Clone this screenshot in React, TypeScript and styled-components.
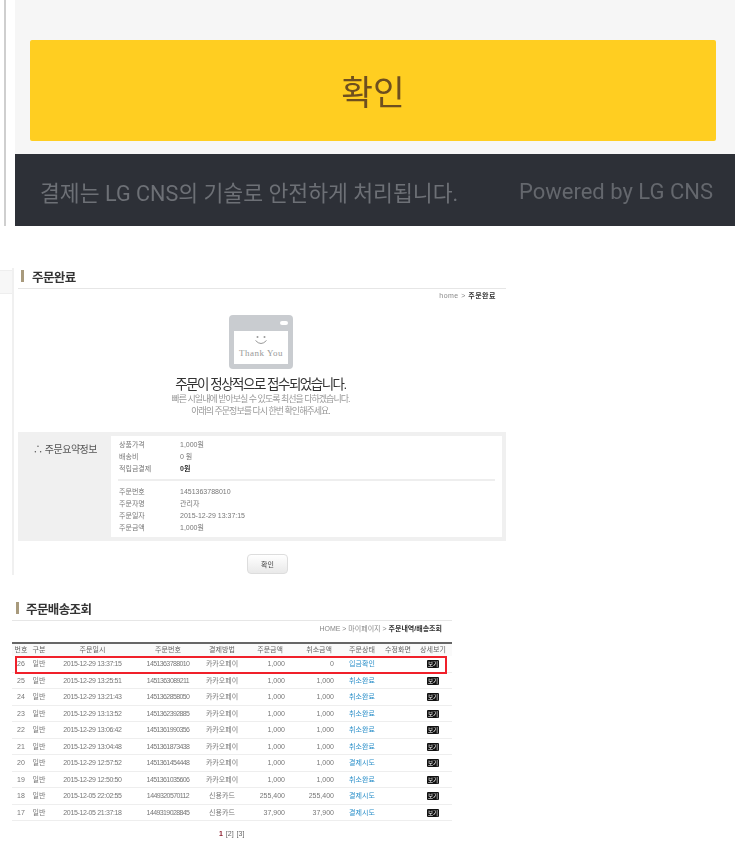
import React, { FC } from "react";
import styled, { createGlobalStyle } from "styled-components";

const GlobalStyle = createGlobalStyle`
  html, body {
    margin: 0;
    padding: 0;
    background: #fff;
    overflow: hidden;
  }
  body {
    font-family: "Liberation Sans", "Noto Sans CJK KR", sans-serif;
    color: #555;
  }
`;

const Page = styled.div`
  width: 740px;
  height: 843px;
  overflow: hidden;
`;

/* mobile payment screen at the top */
const PayShot = styled.section`
  display: flex;
  height: 226px;
  padding-left: 4px;
`;

const PayRule = styled.div`
  width: 2px;
  background: #cfcfcf;
`;

const PayPanel = styled.div`
  display: flex;
  flex-direction: column;
  width: 720px;
  margin-left: 9px;
  background: #f6f6f6;
`;

const ConfirmArea = styled.div`
  height: 154px;
  padding: 40px 19px 0 15px;
  box-sizing: border-box;
`;

const ConfirmBtn = styled.button`
  display: block;
  width: 100%;
  height: 101px;
  padding: 0 0 2px;
  border: 0;
  border-radius: 2px;
  background: #ffce21;
  color: #6e4f1f;
  font-family: Roboto, "Noto Sans CJK KR", sans-serif;
  font-size: 34.5px;
  filter: blur(0.3px);
`;

const PayFooter = styled.div`
  display: flex;
  flex: 1;
  align-items: center;
  justify-content: space-between;
  padding: 2px 22px 0 25px;
  background: #2d3037;
  color: #6d7076;
  font-family: Roboto, "Noto Sans CJK KR", sans-serif;
  font-size: 21.6px;
  white-space: nowrap;
  filter: blur(0.3px);
`;

const PoweredBy = styled.span`
  color: #64676d;
  font-size: 22px;
`;

/* order complete capture */
const CompleteShot = styled.section`
  display: flex;
  width: 506px;
  height: 307px;
  margin-top: 42px;
  filter: blur(0.5px);
`;

const SideGutter = styled.div`
  flex: none;
  width: 12px;
  height: 22px;
  margin-top: 2px;
  background: #f7f7f7;
  border-top: 1px solid #eee;
  border-bottom: 1px solid #eee;
`;

const CompleteBody = styled.div`
  flex: 1;
  padding-left: 4px;
  border-left: 2px solid #f0f0f0;
`;

const TitleRow = styled.div<{ $gap: number }>`
  display: flex;
  align-items: center;
  gap: ${(p) => p.$gap}px;
  height: 21px;
  padding-bottom: 4px;
  box-sizing: border-box;
  border-bottom: 1px solid #e6e6e6;
`;

const TitleBar = styled.i<{ $left: number }>`
  width: 3px;
  height: 12px;
  margin-left: ${(p) => p.$left}px;
  background: #a89a7c;
`;

const TitleText = styled.h2`
  margin: 0;
  color: #333;
  font-size: 12.5px;
  font-weight: 700;
  letter-spacing: -0.6px;
`;

const Crumb = styled.div<{ $pad: number; $track?: number }>`
  padding-right: ${(p) => p.$pad}px;
  color: #888;
  font-size: 7px;
  line-height: 10px;
  letter-spacing: ${(p) => p.$track ?? 0}px;
  text-align: right;

  b {
    color: #333;
  }
`;

const CompleteCrumb = styled(Crumb)`
  margin-top: 2px;
`;

const DoneBlock = styled.div`
  padding-right: 3px;
`;

const ThanksArt = styled.svg`
  display: block;
  margin: 14px auto 0;
`;

const DoneHeading = styled.h3`
  margin: 8px 0 0;
  color: #333;
  font-size: 13.5px;
  font-weight: 400;
  line-height: 16px;
  letter-spacing: -1.5px;
  text-align: center;
`;

const DoneNote = styled.p`
  margin: 0;
  color: #999;
  font-size: 9px;
  line-height: 12px;
  letter-spacing: -1px;
  text-align: center;
`;

const SummaryBox = styled.div`
  display: flex;
  height: 109px;
  margin-top: 15px;
  padding: 4px 4px 4px 0;
  box-sizing: border-box;
  background: #f0f0f0;
`;

const SummaryLabel = styled.div`
  flex: none;
  width: 93px;
  padding: 7px 0 0 15px;
  box-sizing: border-box;
  color: #555;
  font-size: 10px;
  line-height: 14px;
  letter-spacing: -0.5px;
  white-space: nowrap;
`;

const SummaryInner = styled.div`
  flex: 1;
  padding: 3px 7px 0;
  background: #fff;
`;

const InfoRow = styled.div`
  display: flex;
  height: 11.8px;
  font-size: 7px;
  line-height: 12px;
  color: #777;
`;

const InfoKey = styled.span`
  width: 61px;
  padding-left: 1px;
`;

const InfoValue = styled.span<{ $strong?: boolean }>`
  color: ${(p) => (p.$strong ? "#333" : "#777")};
  font-weight: ${(p) => (p.$strong ? 700 : 400)};
`;

const InfoRule = styled.div`
  height: 2px;
  margin: 5px 0 5px;
  background: #eee;
`;

const PlainBtn = styled.button`
  display: block;
  width: 41px;
  height: 20px;
  margin: 13px 0 0 229px;
  padding: 0;
  border: 1px solid #ddd;
  border-radius: 4px;
  background: linear-gradient(#fff, #e9e9e9);
  color: #444;
  font-family: inherit;
  font-size: 7px;
`;

/* order list capture */
const ListShot = styled.section`
  width: 440px;
  margin: 25px 0 0 12px;
  filter: blur(0.5px);
`;

const ListCrumb = styled(Crumb)`
  margin-top: 3px;
`;

const GRID = "18px 18px 89px 62px 46px 43px 54px 40px 32px 38px";

const HeadRow = styled.div`
  display: grid;
  grid-template-columns: ${GRID};
  height: 14px;
  margin-top: 8px;
  box-sizing: border-box;
  border-top: 2px solid #666;
  background: #fafafa;
  color: #666;
  font-size: 7px;
  line-height: 12px;
  text-align: center;
`;

const Row = styled.div<{ $hit?: boolean }>`
  position: relative;
  display: grid;
  grid-template-columns: ${GRID};
  height: 16.5px;
  box-sizing: border-box;
  border-bottom: 1px solid #eee;
  color: #777;
  font-size: 7px;
  line-height: 16px;
  text-align: center;

  &::after {
    content: "";
    display: ${(p) => (p.$hit ? "block" : "none")};
    position: absolute;
    top: 0;
    left: 3px;
    right: 5px;
    height: 18px;
    box-sizing: border-box;
    border: 2px solid #f0202a;
  }
`;

const DateCell = styled.span`
  letter-spacing: -0.35px;
`;

const IdCell = styled.span`
  letter-spacing: -0.6px;
`;

const Amount = styled.span<{ $pad: number }>`
  padding-right: ${(p) => p.$pad}px;
  text-align: right;
`;

const Status = styled.span`
  color: #2b8fc9;
`;

const ViewCell = styled.span`
  display: flex;
  align-items: center;
  justify-content: center;
`;

const ViewBtn = styled.span`
  width: 12px;
  height: 8px;
  border-radius: 1px;
  background: #111;
  color: #fff;
  font-size: 5.5px;
  line-height: 8px;
  text-align: center;
`;

const Pager = styled.div`
  margin-top: 8px;
  padding-left: 207px;
  color: #666;
  font-size: 7px;
  line-height: 10px;
  word-spacing: 1px;

  b {
    color: #8c1c2c;
  }
`;

type Order = {
  no: number;
  at: string;
  id: string;
  pay: string;
  total: string;
  cancel: string;
  status: string;
};

const ORDERS: Order[] = [
  { no: 26, at: "2015-12-29 13:37:15", id: "1451363788010", pay: "카카오페이", total: "1,000", cancel: "0", status: "입금확인" },
  { no: 25, at: "2015-12-29 13:25:51", id: "1451363089211", pay: "카카오페이", total: "1,000", cancel: "1,000", status: "취소완료" },
  { no: 24, at: "2015-12-29 13:21:43", id: "1451362858050", pay: "카카오페이", total: "1,000", cancel: "1,000", status: "취소완료" },
  { no: 23, at: "2015-12-29 13:13:52", id: "1451362392885", pay: "카카오페이", total: "1,000", cancel: "1,000", status: "취소완료" },
  { no: 22, at: "2015-12-29 13:06:42", id: "1451361990356", pay: "카카오페이", total: "1,000", cancel: "1,000", status: "취소완료" },
  { no: 21, at: "2015-12-29 13:04:48", id: "1451361873438", pay: "카카오페이", total: "1,000", cancel: "1,000", status: "취소완료" },
  { no: 20, at: "2015-12-29 12:57:52", id: "1451361454448", pay: "카카오페이", total: "1,000", cancel: "1,000", status: "결제시도" },
  { no: 19, at: "2015-12-29 12:50:50", id: "1451361035606", pay: "카카오페이", total: "1,000", cancel: "1,000", status: "취소완료" },
  { no: 18, at: "2015-12-05 22:02:55", id: "1449320570112", pay: "신용카드", total: "255,400", cancel: "255,400", status: "결제시도" },
  { no: 17, at: "2015-12-05 21:37:18", id: "1449319028845", pay: "신용카드", total: "37,900", cancel: "37,900", status: "결제시도" },
];

const ThankYou: FC = () => (
  <ThanksArt width="64" height="54" viewBox="0 0 64 54" aria-hidden="true">
    <rect width="64" height="54" rx="4" fill="#c9ccd0" />
    <rect x="51" y="6" width="8" height="4" rx="2" fill="#fff" />
    <rect x="5" y="16" width="54" height="33" fill="#fff" />
    <circle cx="28.5" cy="22" r="1" fill="#999" />
    <circle cx="35.5" cy="22" r="1" fill="#999" />
    <path d="M26.5 25.5q5.5 6 11 0" fill="none" stroke="#999" strokeWidth="1" />
    <text x="32" y="41" textAnchor="middle" fontSize="9" letterSpacing="0.5" fill="#999" fontFamily="'Liberation Serif', serif">
      Thank You
    </text>
  </ThanksArt>
);

const App: FC = () => {
  return (
    <Page>
      <GlobalStyle />

      <PayShot>
        <PayRule />
        <PayPanel>
          <ConfirmArea>
            <ConfirmBtn>확인</ConfirmBtn>
          </ConfirmArea>
          <PayFooter>
            <span>결제는 LG CNS의 기술로 안전하게 처리됩니다.</span>
            <PoweredBy>Powered by LG CNS</PoweredBy>
          </PayFooter>
        </PayPanel>
      </PayShot>

      <CompleteShot>
        <SideGutter />
        <CompleteBody>
          <TitleRow $gap={8}>
            <TitleBar $left={3} />
            <TitleText>주문완료</TitleText>
          </TitleRow>
          <CompleteCrumb $pad={10} $track={0.5}>
            home &gt; <b>주문완료</b>
          </CompleteCrumb>
          <DoneBlock>
            <ThankYou />
            <DoneHeading>주문이 정상적으로 접수되었습니다.</DoneHeading>
            <DoneNote>빠른 시일내에 받아보실 수 있도록 최선을 다하겠습니다.</DoneNote>
            <DoneNote>아래의 주문정보를 다시 한번 확인해주세요.</DoneNote>
          </DoneBlock>
          <SummaryBox>
            <SummaryLabel>∴ 주문요약정보</SummaryLabel>
            <SummaryInner>
              <InfoRow><InfoKey>상품가격</InfoKey><InfoValue>1,000원</InfoValue></InfoRow>
              <InfoRow><InfoKey>배송비</InfoKey><InfoValue>0 원</InfoValue></InfoRow>
              <InfoRow><InfoKey>적립금결제</InfoKey><InfoValue $strong>0원</InfoValue></InfoRow>
              <InfoRule />
              <InfoRow><InfoKey>주문번호</InfoKey><InfoValue>1451363788010</InfoValue></InfoRow>
              <InfoRow><InfoKey>주문자명</InfoKey><InfoValue>관리자</InfoValue></InfoRow>
              <InfoRow><InfoKey>주문일자</InfoKey><InfoValue>2015-12-29 13:37:15</InfoValue></InfoRow>
              <InfoRow><InfoKey>주문금액</InfoKey><InfoValue>1,000원</InfoValue></InfoRow>
            </SummaryInner>
          </SummaryBox>
          <PlainBtn>확인</PlainBtn>
        </CompleteBody>
      </CompleteShot>

      <ListShot>
        <TitleRow $gap={7}>
          <TitleBar $left={4} />
          <TitleText>주문배송조회</TitleText>
        </TitleRow>
        <ListCrumb $pad={10}>
          HOME &gt; 마이페이지 &gt; <b>주문내역/배송조회</b>
        </ListCrumb>
        <HeadRow>
          <span>번호</span>
          <span>구분</span>
          <span>주문일시</span>
          <span>주문번호</span>
          <span>결제방법</span>
          <Amount $pad={5}>주문금액</Amount>
          <Amount $pad={10}>취소금액</Amount>
          <span>주문상태</span>
          <span>수정화면</span>
          <span>상세보기</span>
        </HeadRow>
        {ORDERS.map((o, i) => (
          <Row key={o.no} $hit={i === 0}>
            <span>{o.no}</span>
            <span>일반</span>
            <DateCell>{o.at}</DateCell>
            <IdCell>{o.id}</IdCell>
            <span>{o.pay}</span>
            <Amount $pad={3}>{o.total}</Amount>
            <Amount $pad={8}>{o.cancel}</Amount>
            <Status>{o.status}</Status>
            <span />
            <ViewCell>
              <ViewBtn>보기</ViewBtn>
            </ViewCell>
          </Row>
        ))}
        <Pager>
          <b>1</b> [2] [3]
        </Pager>
      </ListShot>
    </Page>
  );
};

export default App;
